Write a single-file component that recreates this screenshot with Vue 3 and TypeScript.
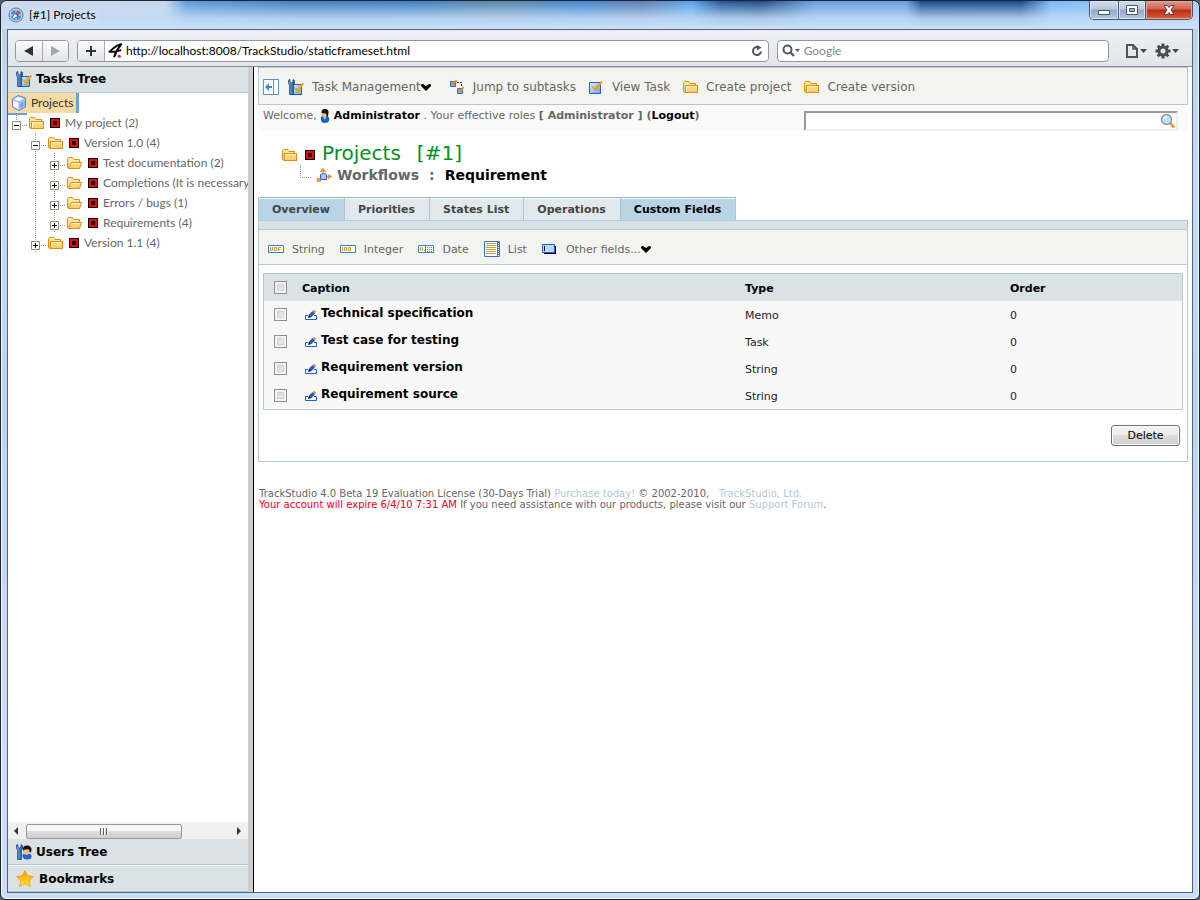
<script setup lang="ts">
import { ref } from 'vue'

interface TreeRow {
  label: string
  level: number
  open: boolean
  guides: boolean[]
}
interface Action {
  label: string
  icon: string
  menu?: boolean
}
interface Field {
  caption: string
  type: string
  order: number
  checked: boolean
}

const address = ref('http://localhost:8008/TrackStudio/staticframeset.html')
const webQuery = ref('')
const taskQuery = ref('')
const allChecked = ref(false)

const tree: TreeRow[] = [
  { label: 'My project (2)', level: 0, open: true, guides: [] },
  { label: 'Version 1.0 (4)', level: 1, open: true, guides: [false] },
  { label: 'Test documentation (2)', level: 2, open: false, guides: [false, true] },
  { label: 'Completions (It is necessary', level: 2, open: false, guides: [false, true] },
  { label: 'Errors / bugs (1)', level: 2, open: false, guides: [false, true] },
  { label: 'Requirements (4)', level: 2, open: false, guides: [false, true] },
  { label: 'Version 1.1 (4)', level: 1, open: false, guides: [false] },
]

const actions: Action[] = [
  { label: 'Task Management', icon: 'tasks', menu: true },
  { label: 'Jump to subtasks', icon: 'subtasks' },
  { label: 'View Task', icon: 'view' },
  { label: 'Create project', icon: 'folder' },
  { label: 'Create version', icon: 'folder' },
]

const tabs = ['Overview', 'Priorities', 'States List', 'Operations', 'Custom Fields']

const fieldTypes: Action[] = [
  { label: 'String', icon: 'string' },
  { label: 'Integer', icon: 'integer' },
  { label: 'Date', icon: 'date' },
  { label: 'List', icon: 'list' },
  { label: 'Other fields...', icon: 'other', menu: true },
]

const fields = ref<Field[]>([
  { caption: 'Technical specification', type: 'Memo', order: 0, checked: false },
  { caption: 'Test case for testing', type: 'Task', order: 0, checked: false },
  { caption: 'Requirement version', type: 'String', order: 0, checked: false },
  { caption: 'Requirement source', type: 'String', order: 0, checked: false },
])

function toggleAll() {
  fields.value.forEach((f) => (f.checked = allChecked.value))
}
</script>

<template>
  <div class="window">
    <svg class="defs" aria-hidden="true">
      <defs>
        <linearGradient id="gFolder" x1="0" y1="0" x2="0" y2="1">
          <stop offset="0" stop-color="#fff0b0" />
          <stop offset="1" stop-color="#fbc964" />
        </linearGradient>
        <linearGradient id="gBlue" x1="0" y1="0" x2="1" y2="1">
          <stop offset="0" stop-color="#e4f0ff" />
          <stop offset="1" stop-color="#6aa4f4" />
        </linearGradient>
        <linearGradient id="gStar" x1="0" y1="0" x2="0" y2="1">
          <stop offset="0" stop-color="#ff9c00" />
          <stop offset="1" stop-color="#ffe23c" />
        </linearGradient>
        <linearGradient id="gWrench" x1="0" y1="0" x2="1" y2="0">
          <stop offset="0" stop-color="#6ab0ee" />
          <stop offset="1" stop-color="#1a4f9c" />
        </linearGradient>
        <symbol id="folder" viewBox="0 0 16 16">
          <path d="M1.500 12.500V3.500L2.500 2.500H6.500L8 4.500H13.500V6.500H15.500V13.500H3L1.500 12.500Z" fill="url(#gFolder)" stroke="#dd8c14" />
          <path d="M3.500 13V6.500H15.500V13.500H3.500" fill="none" stroke="#dd8c14" />
          <path d="M4.500 12.500V7.500H14.500" fill="none" stroke="#fff6cc" />
        </symbol>
        <symbol id="folder-open" viewBox="0 0 16 16">
          <path d="M1.500 12.500V3.500L2.500 2.500H6.500L8 4.500H13.500V7.500H15.500L13.500 13.500H2.500Z" fill="url(#gFolder)" stroke="#dd8c14" />
          <path d="M2.500 13L5.500 7.500H15.500" fill="none" stroke="#dd8c14" />
          <path d="M5 10L6 8.500H14.500" fill="none" stroke="#fff6cc" />
        </symbol>
        <symbol id="state" viewBox="0 0 10 10">
          <path d="M0 0H10V10H0Z" fill="#000" />
          <path d="M1 1H9V9H1Z" fill="#ff0000" />
          <path d="M3 3H7V7H3Z" fill="#000" />
        </symbol>
        <symbol id="tasks" viewBox="0 0 16 16">
          <path d="M3.500 5.500H13.500V15.500H3.500Z" fill="url(#gBlue)" stroke="#1d5fd0" />
          <path d="M.5 1L2 .5V3L3.500 4L5 3V.5L6.500 1.500V4.500L5.500 6V15.500H1.500V6L.5 4.500Z" fill="url(#gWrench)" stroke="#1c3c68" stroke-width=".7" />
          <path d="M6 8L9 10L14.500 4L15.800 5L9.500 14Z" fill="#f7a61c" stroke="#d88a14" stroke-width=".4" />
        </symbol>
        <symbol id="users" viewBox="0 0 16 16">
          <path d="M.5 1L2 .5V3L3.500 4L5 3V.5L6.500 1.500V4.500L5.500 6V15.500H1.500V6L.5 4.500Z" fill="url(#gWrench)" stroke="#1c3c68" stroke-width=".7" />
          <path d="M6.500 12Q6 9 11 9.500Q16 9 15.500 13Q15.500 15.500 11 15.500Q7 15.500 6.500 12Z" fill="#1668dd" />
          <circle cx="10.500" cy="7" r="3.800" fill="#f6c078" />
          <path d="M7 7Q6 1.500 11 1.500Q16 1.500 15.500 7L14 9Q13.500 5.500 12 5Q10 6 8 5.500Z" fill="#101010" />
        </symbol>
        <symbol id="user" viewBox="0 0 10 14">
          <path d="M1 10Q0 7 3 7H7Q10 8 9 12Q8 14 5 14Q1 14 1 11Z" fill="#1561d8" />
          <path d="M3 8H6L5 11Z" fill="#f6c078" />
          <circle cx="4.500" cy="5" r="3" fill="#f6c078" />
          <path d="M1.500 4Q1 0 5 0Q9 0 8.500 4Q8.500 7 7 8L6 4.500Z" fill="#101010" />
        </symbol>
        <symbol id="cube" viewBox="0 0 16 16">
          <path d="M1.500 4L7 .5L14.500 3V12L8 15.500L1.500 12Z" fill="#8db4f0" stroke="#5b87d4" />
          <path d="M2.500 4.300L7 1.500L13.500 3.700L8 6.500Z" fill="#eef5ff" />
          <path d="M2 5.500L7.500 7.500V14.500L2 11.500Z" fill="#f5f9ff" />
          <path d="M8.500 7.500L14 5V11.500L8.500 14.500Z" fill="#a8c7f7" />
          <path d="M8.500 10L14 7.500M8.500 12L14 9.500M11 7V13" stroke="#5b87d4" stroke-width=".7" />
        </symbol>
        <symbol id="star" viewBox="0 0 18 17">
          <path d="M9 .5L11.700 5.700L17.500 6.500L13.300 10.600L14.300 16.500L9 13.700L3.700 16.500L4.700 10.600L.5 6.500L6.300 5.700Z" fill="url(#gStar)" stroke="#f39b0c" stroke-width=".8" />
        </symbol>
        <symbol id="subtasks" viewBox="0 0 16 16">
          <path d="M8 3.500H12.500V8" fill="none" stroke="#111" stroke-dasharray="2 1" />
          <path d="M1.500 2.500H6.500V7.500H1.500Z" fill="#7fb0f6" stroke="#2a6ae0" />
          <path d="M8.500 9.500H13.500V14.500H8.500Z" fill="#7fb0f6" stroke="#2a6ae0" />
          <path d="M2.500 3.500L4.500 5.500L7.500 1M9.500 10.500L11.500 12.500L14.500 8" fill="none" stroke="#e48b12" stroke-width="1.800" />
        </symbol>
        <symbol id="view" viewBox="0 0 16 16">
          <path d="M1.500 3.500H12.500V14.500H1.500Z" fill="url(#gBlue)" stroke="#1d5fe0" />
          <path d="M3.500 7L6.500 9L13.500 2L14.500 3L7.500 12.500Z" fill="#f5a01a" stroke="#d88408" stroke-width=".4" />
        </symbol>
        <symbol id="collapse" viewBox="0 0 16 16">
          <path d="M.5 .5H15.500V15.500H.5Z" fill="#f8fbff" stroke="#5b92cf" />
          <path d="M10.500 1V15" stroke="#5b92cf" />
          <path d="M2 8L6 4V7H9V9H6V12Z" fill="#4a85c8" />
        </symbol>
        <symbol id="string" viewBox="0 0 16 16">
          <path d="M.5 4.500H15.500V11.500H.5Z" fill="#fff" stroke="#3b7fdc" />
          <path d="M2.500 6V9.500H4.500V6M6.500 6V9.500H8.500V6.500H6.500M10.500 10V6.500H13M10.500 8.500H12.500" fill="none" stroke="#cf9a3c" />
        </symbol>
        <symbol id="integer" viewBox="0 0 16 16">
          <path d="M.5 4.500H15.500V11.500H.5Z" fill="#fff" stroke="#3b7fdc" />
          <path d="M2.500 6V10M4.500 6.500H6.500V9.500H4.500ZM8.500 6.500H10.500V9.500H8.500Z" fill="none" stroke="#cf9a3c" />
        </symbol>
        <symbol id="date" viewBox="0 0 16 16">
          <path d="M.5 4.500H15.500V11.500H.5Z" fill="#fff" stroke="#3b7fdc" />
          <path d="M2.500 6V10M4.500 6V10M6 9.500H7" stroke="#cf9a3c" />
          <path d="M7.500 5V11" stroke="#3b7fdc" />
          <path d="M9 6.500H15M9 8.500H15M9 10.500H15" stroke="#3b7fdc" stroke-dasharray="1 1" />
        </symbol>
        <symbol id="list" viewBox="0 0 16 16">
          <path d="M.5 .5H15.500V15.500H.5Z" fill="#fff" stroke="#2f78d8" />
          <path d="M2 2.500H12M2 4.500H12M2 6.500H12M2 8.500H12M2 10.500H12M2 12.500H12" stroke="#cf9a3c" />
          <path d="M13.500 1V15" stroke="#2f78d8" />
          <path d="M14.500 1V15" stroke="#2f78d8" stroke-dasharray="1 1" />
        </symbol>
        <symbol id="other" viewBox="0 0 16 16">
          <path d="M2 5H14V13H2Z" fill="#000" />
          <path d="M.5 3.500H12.500V11.500H.5Z" fill="#bcd8fc" stroke="#1e5fd8" />
          <path d="M2.500 5V10" stroke="#111" />
        </symbol>
        <symbol id="edit" viewBox="0 0 12 10">
          <path d="M3 5.500H.5V9.500H11.500V5.500H9" fill="#fff" stroke="#1860e0" />
          <path d="M3 8L4 4.500L6.500 7Z" fill="#111" />
          <path d="M4 4.500L7.500 1L10 3.500L6.500 7Z" fill="#1a5cd4" />
          <path d="M7.500 1L9.500 0L11 1.500L10 3.500Z" fill="#dd8c24" />
        </symbol>
        <symbol id="workflow" viewBox="0 0 16 16">
          <path d="M4.500 12.500V8Q4.500 6.500 7.500 6.500Q10.500 6.500 10.500 8V12.500Z" fill="#a8c8fa" stroke="#1d5fd8" />
          <path d="M7 7V3M4.500 5L7 2L9.500 5M16 9.500H12M14 7.500L11.500 9.500L14 12M4 11L1.500 14M1.500 10.500V14H5" fill="none" stroke="#e3901c" stroke-width="1.300" />
        </symbol>
        <symbol id="caret" viewBox="0 0 10 7">
          <path d="M0 1L1 0H2L5 2L8 0H9L10 1V2L5 7L0 2Z" fill="#000" />
        </symbol>
      </defs>
    </svg>

    <header class="titlebar">
      <svg class="compass" viewBox="0 0 16 16" aria-hidden="true">
        <circle cx="8" cy="8" r="7" fill="#c9ced6" stroke="#6b7686" />
        <circle cx="8" cy="8" r="5.300" fill="#3f8fdc" />
        <path d="M8 3V5M8 11V13M3 8H5M11 8H13" stroke="#dff0ff" />
        <path d="M12 4L9 9L7 7Z" fill="#e53a28" />
        <path d="M4 12L9 9L7 7Z" fill="#fff" />
      </svg>
      <span class="title">[#1] Projects</span>
      <div class="controls">
        <button class="ctl" type="button" aria-label="Minimize">
          <svg viewBox="0 0 14 12"><path d="M1.500 6.500H12.500V10.500H1.500Z" fill="#fff" stroke="#4a5568" /></svg>
        </button>
        <button class="ctl max" type="button" aria-label="Maximize">
          <svg viewBox="0 0 14 12"><path d="M1.500 1.500H12.500V10.500H1.500Z" fill="#fff" stroke="#4a5568" /><path d="M4.500 4.500H9.500V7.500H4.500Z" fill="#9fb4d0" stroke="#4a5568" /></svg>
        </button>
        <button class="ctl close" type="button" aria-label="Close">
          <svg viewBox="0 0 14 12"><path d="M2 1.500H5.500L7 3.500L8.500 1.500H12L9 6L12 10.500H8.500L7 8.500L5.500 10.500H2L5 6Z" fill="#fff" stroke="#5a4048" /></svg>
        </button>
      </div>
    </header>

    <div class="client">
      <nav class="navbar" aria-label="Browser">
        <div class="pair">
          <button type="button" aria-label="Back"><svg viewBox="0 0 10 10"><path d="M0 5L9 0V10Z" fill="#30343a" /></svg></button>
          <button type="button" aria-label="Forward"><svg viewBox="0 0 10 10"><path d="M9 5L0 0V10Z" fill="#a4a6ac" /></svg></button>
        </div>
        <div class="address">
          <button type="button" aria-label="Add bookmark"><svg viewBox="0 0 10 10"><path d="M0 5H10M5 0V10" stroke="#30343a" stroke-width="2" /></svg></button>
          <svg class="four" viewBox="0 0 18 18" aria-hidden="true">
            <path d="M15.500 2Q10 3 2.500 10.500Q9 10.500 15 8.500M15.500 2Q10 8 7.500 16" fill="none" stroke="#000" stroke-width="2" stroke-linejoin="round" />
            <circle cx="13" cy="15" r="1.600" fill="#f01818" />
          </svg>
          <input v-model="address" type="text" aria-label="Address" />
          <button class="reload" type="button" aria-label="Reload">
            <svg viewBox="0 0 12 12"><path d="M7 2H6A4 4 0 1 0 10 6.500" fill="none" stroke="#505358" stroke-width="2" /><path d="M6 0L10.500 2.500L6 5.500Z" fill="#505358" /></svg>
          </button>
        </div>
        <div class="websearch">
          <svg class="glass" viewBox="0 0 18 14" aria-hidden="true"><circle cx="5.500" cy="5.500" r="4" fill="none" stroke="#555a60" stroke-width="2" /><path d="M8.500 8.500L12 12" stroke="#555a60" stroke-width="2.400" /><path d="M13 5H18L15.500 8Z" fill="#555a60" /></svg>
          <input v-model="webQuery" type="text" placeholder="Google" aria-label="Web search" />
        </div>
        <button class="tool" type="button" aria-label="Page menu">
          <svg viewBox="0 0 22 16"><path d="M2 2H8L12 6V14H2Z" fill="none" stroke="#505358" stroke-width="2" /><path d="M8 1V6H13" fill="none" stroke="#505358" stroke-width="1.500" /><path d="M15 6H22L18.500 10Z" fill="#42464c" /></svg>
        </button>
        <button class="tool gear" type="button" aria-label="Settings menu">
          <svg viewBox="0 0 24 16"><circle cx="8" cy="8" r="4" fill="none" stroke="#484b50" stroke-width="3" /><path d="M8 .5V3.500M8 12.500V15.500M.5 8H3.500M12.500 8H15.500M2.700 2.700L4.800 4.800M11.200 11.200L13.300 13.300M2.700 13.300L4.800 11.200M11.200 4.800L13.300 2.700" stroke="#484b50" stroke-width="3" /><path d="M17 6H24L20.500 10Z" fill="#42464c" /></svg>
        </button>
      </nav>

      <div class="frames">
        <aside class="side">
          <button class="panel top" type="button"><svg class="i16"><use href="#tasks" /></svg>Tasks Tree</button>
          <div class="tree">
            <a class="root" href="#projects"><svg class="i16"><use href="#cube" /></svg>Projects</a>
            <div class="stub"></div>
            <ul>
              <li v-for="row in tree" :key="row.label">
                <span v-for="(g, i) in row.guides" :key="i" class="cell" :class="{ guide: g }"></span>
                <button class="cell knob" :class="{ first: row.level === 0 }" type="button" :aria-label="row.open ? 'Collapse' : 'Expand'">
                  <svg viewBox="0 0 9 9"><path d="M.5 .5H8.500V8.500H.5Z" fill="#fff" stroke="#8f8f78" /><path d="M2 4.500H7" stroke="#000" /><path v-if="!row.open" d="M4.500 2V7" stroke="#000" /></svg>
                </button>
                <svg class="i16 fold"><use :href="row.level === 2 ? '#folder-open' : '#folder'" /></svg>
                <svg class="state"><use href="#state" /></svg>
                <a href="#task">{{ row.label }}</a>
              </li>
            </ul>
          </div>
          <div class="scroll" aria-hidden="true">
            <svg viewBox="0 0 6 8"><path d="M5 0V8L1 4Z" fill="#333" /></svg>
            <div class="track"><div class="thumb"><i></i><i></i><i></i></div></div>
            <svg viewBox="0 0 6 8"><path d="M1 0V8L5 4Z" fill="#333" /></svg>
          </div>
          <button class="panel" type="button"><svg class="i16"><use href="#users" /></svg>Users Tree</button>
          <button class="panel marks" type="button"><svg class="star"><use href="#star" /></svg>Bookmarks</button>
        </aside>

        <main>
          <div class="actions">
            <button class="collapse" type="button" aria-label="Hide tree"><svg class="i16"><use href="#collapse" /></svg></button>
            <button v-for="a in actions" :key="a.label" class="action" :class="{ menu: a.menu }" type="button">
              <svg class="i16"><use :href="'#' + a.icon" /></svg><span>{{ a.label }}</span><svg v-if="a.menu" class="caret"><use href="#caret" /></svg>
            </button>
          </div>

          <div class="welcome">
            <p>Welcome, <svg class="user"><use href="#user" /></svg> <a class="strong" href="#me">Administrator</a> . Your effective roles <b>[ Administrator ] (<a class="strong" href="#logout">Logout</a>)</b></p>
            <div class="find">
              <input v-model="taskQuery" type="text" aria-label="Search tasks" />
              <button type="button" aria-label="Search">
                <svg viewBox="0 0 16 16"><path d="M10 10L14.500 14.500" stroke="#e3a62e" stroke-width="3" /><circle cx="6.500" cy="6.500" r="5" fill="#bfe0f5" stroke="#8a99a8" stroke-width="1.400" /><path d="M4 6Q4.500 4 7 3.500" fill="none" stroke="#fff" stroke-width="1.500" /></svg>
              </button>
            </div>
          </div>

          <div class="heading">
            <h1><svg class="i16"><use href="#folder" /></svg><svg class="state"><use href="#state" /></svg><a href="#projects">Projects</a><span>[#1]</span></h1>
            <h2><span class="elbow"></span><svg class="i16"><use href="#workflow" /></svg><a href="#workflows">Workflows</a><span class="colon">:</span><b>Requirement</b></h2>
          </div>

          <div class="tabs" role="tablist">
            <button v-for="(t, i) in tabs" :key="t" type="button" role="tab" :aria-selected="i === 4" :class="{ lit: i === 0 || i === 4, current: i === 4 }">{{ t }}</button>
          </div>
          <section class="card">
            <div class="strip"></div>
            <div class="types">
              <button v-for="a in fieldTypes" :key="a.label" class="action" type="button">
                <svg class="i16"><use :href="'#' + a.icon" /></svg><span>{{ a.label }}</span><svg v-if="a.menu" class="caret"><use href="#caret" /></svg>
              </button>
            </div>
            <table>
              <thead>
                <tr>
                  <th class="pick"><input v-model="allChecked" type="checkbox" aria-label="Select all" @change="toggleAll" /></th>
                  <th class="cap">Caption</th>
                  <th class="type">Type</th>
                  <th>Order</th>
                </tr>
              </thead>
              <tbody>
                <tr v-for="f in fields" :key="f.caption">
                  <td class="pick"><input v-model="f.checked" type="checkbox" :aria-label="f.caption" /></td>
                  <td class="cap"><a href="#edit"><svg class="edit"><use href="#edit" /></svg>{{ f.caption }}</a></td>
                  <td>{{ f.type }}</td>
                  <td>{{ f.order }}</td>
                </tr>
              </tbody>
            </table>
            <div class="buttons"><button type="button">Delete</button></div>
          </section>

          <footer>
            <div>TrackStudio 4.0 Beta 19 Evaluation License (30-Days Trial) <a href="#buy">Purchase today!</a> © 2002-2010, &nbsp; <a href="#site">TrackStudio, Ltd.</a></div>
            <div><em>Your account will expire 6/4/10 7:31 AM</em> If you need assistance with our products, please visit our <a href="#forum">Support Forum</a>.</div>
          </footer>
        </main>
      </div>
    </div>
  </div>
</template>

<style>
html,
body,
#app {
  height: 100%;
}
body {
  background: #55606c;
}
</style>

<style scoped>
* {
  box-sizing: border-box;
}
button {
  border: 0;
  padding: 0;
  margin: 0;
  background: none;
  font: inherit;
  color: inherit;
}
input {
  font: inherit;
  margin: 0;
  min-width: 0;
}
a {
  color: inherit;
  text-decoration: none;
}
.defs {
  position: absolute;
  width: 0;
  height: 0;
}
.i16 {
  width: 16px;
  height: 16px;
  flex: none;
}
.state {
  width: 10px;
  height: 10px;
  flex: none;
}
.window {
  min-height: 100%;
  display: flex;
  flex-direction: column;
  padding: 0 7px 7px;
  border: 1px solid #20262e;
  border-radius: 7px 7px 6px 6px;
  box-shadow: inset 0 0 0 1px #f2f8ff;
  background: linear-gradient(180deg, #b9d2ee 0, #c3dcf8 200px, #b8d4f2 400px, #c8dcf4 650px, #c9e0fa 100%);
  font-family: "DejaVu Sans", Verdana, sans-serif;
  font-size: 11px;
  color: #666;
  overflow: hidden;
}
.titlebar {
  height: 28px;
  margin: 0 -7px;
  padding-left: 7px;
  display: flex;
  align-items: center;
  border-radius: 7px 7px 0 0;
  background:
    linear-gradient(180deg, transparent 0, rgba(196, 220, 247, 0.85) 17px, #cbe1fb 100%),
    linear-gradient(90deg, #cfdbea 0, #c6d7ec 165px, #5f9ad6 185px, #427bbd 300px, #3d80c4 410px, #5c87a8 500px, #3f86d2 580px, #5b7dab 640px, #52a4f0 690px, #215796 720px, #1c4a86 760px, #69a0de 815px, #69a0de 905px, #164c90 920px, #14488a 1020px, #78b8f8 1050px, #a8cff8 100%);
}
.compass {
  width: 16px;
  height: 16px;
}
.title {
  flex: 1;
  margin-left: 5px;
  font: 12px/16px Lato, "Segoe UI", sans-serif;
  color: #000;
  text-shadow: 0 0 6px #fff;
}
.controls {
  align-self: flex-start;
  display: flex;
  margin-right: 6px;
  border: 1px solid #45566c;
  border-top: 0;
  border-radius: 0 0 5px 5px;
  overflow: hidden;
}
.ctl {
  width: 28px;
  height: 18px;
  display: grid;
  place-items: center;
  box-shadow: inset 0 0 0 1px #d8e6f4;
  background: linear-gradient(#d3deea 0, #b9c8da 45%, #93a9c4 50%, #b4cae2 100%);
}
.ctl + .ctl {
  border-left: 1px solid #45566c;
}
.ctl svg {
  width: 14px;
  height: 12px;
}
.max {
  width: 27px;
}
.close {
  width: 47px;
  box-shadow: inset 0 0 0 1px #eca492;
  background: linear-gradient(#e39a88 0, #cf6552 45%, #b82c16 50%, #d9603c 100%);
}
.client {
  flex: 1;
  display: flex;
  flex-direction: column;
  border: 1px solid #59636f;
  margin: 0 -1px -1px;
  background: #fff;
}
.navbar {
  height: 37px;
  padding: 5px 13px 0 7px;
  display: flex;
  align-items: center;
  border-bottom: 1px solid #8c8c94;
  background: linear-gradient(#eeeff4, #e4e4ec);
  font: 12px/16px Lato, "Segoe UI", sans-serif;
  color: #000;
}
.pair,
.address,
.websearch {
  height: 22px;
  display: flex;
  align-items: center;
  border: 1px solid #94969e;
  border-radius: 4px;
  background: #fff;
  overflow: hidden;
}
.pair button,
.address > button:first-child {
  height: 20px;
  width: 26px;
  display: grid;
  place-items: center;
  background: linear-gradient(#fdfdfe, #e2e3ea);
}
.pair button + button {
  border-left: 1px solid #a6a8b0;
}
.pair {
  flex: none;
}
.pair svg {
  width: 10px;
  height: 10px;
}
.address {
  flex: 693;
  margin-left: 8px;
}
.address > button:first-child {
  width: 27px;
  border-right: 1px solid #a6a8b0;
}
.address > button:first-child svg {
  width: 10px;
  height: 10px;
}
.four {
  width: 17px;
  height: 17px;
  flex: none;
  margin-left: 2px;
}
.navbar input {
  flex: 1;
  border: 0;
  outline: 0;
  padding: 0 2px;
  background: none;
}
.navbar input::placeholder {
  color: #85878c;
  opacity: 1;
}
.reload {
  width: 22px;
  height: 20px;
  display: grid;
  place-items: center;
}
.reload svg {
  width: 12px;
  height: 12px;
}
.websearch {
  flex: 332;
  margin-left: 8px;
}
.glass {
  width: 18px;
  height: 14px;
  margin-left: 4px;
  margin-right: 2px;
}
.tool {
  margin-left: 16px;
  flex: none;
}
.tool svg {
  display: block;
  width: 22px;
  height: 16px;
}
.gear {
  margin-left: 8px;
}
.gear svg {
  width: 24px;
}
.frames {
  flex: 1;
  display: flex;
}
.side {
  width: 240px;
  flex: none;
  display: flex;
  flex-direction: column;
}
.panel {
  height: 26px;
  flex: none;
  padding: 0 0 0 8px;
  display: flex;
  align-items: center;
  gap: 4px;
  background: #dae2e5;
  border-bottom: 1px solid #afcbdb;
  font-size: 12px;
  font-weight: bold;
  color: #000;
}
.top {
  padding-bottom: 1px;
}
.marks {
  gap: 5px;
}
.panel + .panel {
  height: 27px;
  border-top: 1px solid #fff;
}
.star {
  width: 18px;
  height: 17px;
}
.tree {
  flex: 1;
  overflow: hidden;
  font: 12px/20px Lato, "Segoe UI", sans-serif;
}
.root {
  width: 71px;
  height: 20px;
  padding-left: 3px;
  display: flex;
  align-items: center;
  gap: 4px;
  border-right: 3px solid #6f9fd4;
  background: #f7d9a2;
  color: #333;
}
.stub {
  width: 19px;
  height: 2px;
  margin-bottom: -2px;
  background: #6f9fd4;
}
ul {
  list-style: none;
  margin: 0;
  padding: 0;
}
li {
  height: 20px;
  display: flex;
  align-items: center;
  white-space: nowrap;
}
.cell {
  width: 19px;
  height: 20px;
  flex: none;
}
.guide,
.knob {
  background: repeating-linear-gradient(180deg, #9a9a86 0 1px, transparent 1px 2px) 8px 0 / 1px 20px no-repeat;
}
.knob {
  padding: 5px 0 0 4px;
  background:
    repeating-linear-gradient(180deg, #9a9a86 0 1px, transparent 1px 2px) 8px 0 / 1px 20px no-repeat,
    repeating-linear-gradient(90deg, #9a9a86 0 1px, transparent 1px 2px) 14px 12px / 6px 1px no-repeat;
}
.knob.first {
  background:
    repeating-linear-gradient(180deg, #9a9a86 0 1px, transparent 1px 2px) 8px 0 / 1px 8px no-repeat,
    repeating-linear-gradient(90deg, #9a9a86 0 1px, transparent 1px 2px) 14px 12px / 6px 1px no-repeat;
}
.knob svg {
  display: block;
  width: 9px;
  height: 9px;
}
.fold {
  margin: 0 6px 0 1px;
}
li .state {
  margin-right: 5px;
}
.scroll {
  height: 17px;
  flex: none;
  display: flex;
  align-items: center;
  padding: 1px 6px 0 5px;
  background: #f1f1f2;
}
.scroll svg {
  width: 6px;
  height: 8px;
}
.track {
  flex: 1;
  padding: 0 7px;
}
.thumb {
  width: 77%;
  height: 15px;
  display: flex;
  justify-content: center;
  align-items: center;
  gap: 1px;
  border: 1px solid #979797;
  border-radius: 2px;
  background: linear-gradient(#f6f6f6 0 45%, #dcdcdd 50%, #cfcfd1 100%);
}
.thumb i {
  width: 2px;
  height: 7px;
  border-left: 1px solid #5c5c5c;
  background: #f6f6f6;
}
main {
  flex: 1;
  min-width: 0;
  margin-left: 5px;
  padding: 0 4px;
  border-left: 1px solid #000;
  box-shadow: -5px 0 0 #cdcdcd;
}
.actions {
  height: 38px;
  padding: 2px 0 0 4px;
  display: flex;
  align-items: center;
  border: 1px solid #b0c9d8;
  background: #f3f4ef;
}
.action {
  display: flex;
  align-items: center;
  margin-right: 15px;
  font-size: 11px;
  white-space: nowrap;
}
.actions .action {
  margin-right: 12px;
  font-size: 12px;
}
.action .i16 {
  margin-right: 8px;
}
.collapse {
  height: 16px;
  margin-right: 9px;
}
.actions .menu {
  margin-right: 18px;
}
.caret {
  width: 10px;
  height: 7px;
}
.welcome {
  height: 26px;
  display: flex;
  justify-content: space-between;
  padding: 0 10px 0 5px;
  background: #fafafa;
}
p {
  margin: 0;
  font-size: 11px;
  line-height: 21px;
  white-space: nowrap;
}
.user {
  width: 10px;
  height: 14px;
  vertical-align: -4px;
}
.strong {
  font-weight: bold;
  color: #000;
}
.find {
  width: 374px;
  height: 20px;
  margin-top: 6px;
  display: flex;
  align-items: center;
  border: 2px solid #9a9a9a;
  border-right-color: #eee;
  border-bottom-color: #eee;
  background: #fff;
}
.find input {
  flex: 1;
  border: 0;
  outline: 0;
  background: none;
}
.find button,
.find svg {
  width: 16px;
  height: 16px;
  display: block;
}
.heading {
  padding: 11px 0 0 23px;
}
h1,
h2 {
  margin: 0;
  display: flex;
  align-items: center;
  font-weight: normal;
}
h1 {
  font-size: 20px;
  line-height: 23px;
  color: #00921e;
}
h1 .i16 {
  margin-right: 8px;
  margin-top: 2px;
}
h1 .state {
  margin-right: 7px;
  margin-top: 2px;
}
h1 span {
  margin-left: 16px;
}
h2 {
  padding-left: 19px;
  font-size: 14px;
  line-height: 20px;
  font-weight: bold;
}
h2 .i16 {
  margin: 0 5px 0 5px;
}
h2 b {
  color: #000;
}
.elbow {
  width: 11px;
  height: 13px;
  align-self: flex-start;
  border-left: 1px dotted #9a9a86;
  border-bottom: 1px dotted #9a9a86;
}
.colon {
  margin: 0 10px;
}
.tabs {
  margin-top: 12px;
  display: flex;
}
.tabs button {
  height: 23px;
  padding: 0 14px 0 13px;
  border-top: 1px solid #8fb5cc;
  border-right: 1px solid #a9c7d9;
  box-shadow: inset 0 1px 0 #fff;
  background: #e1e9ed;
  font-size: 11px;
  font-weight: bold;
  color: #444;
  white-space: nowrap;
}
.tabs button:first-child {
  border-left: 1px solid #a9c7d9;
}
.tabs .lit {
  background: #b9d5e5;
}
.tabs .current {
  color: #000;
}
.card {
  border: 1px solid #b0c9d8;
  padding-bottom: 15px;
}
.strip {
  height: 9px;
  background: #dae2e5;
  border-bottom: 1px solid #b0c9d8;
}
.types {
  height: 35px;
  padding: 4px 0 0 9px;
  display: flex;
  align-items: center;
  border-bottom: 1px solid #b0c9d8;
  background: #f3f4ef;
}
table {
  width: calc(100% - 8px);
  margin: 8px 4px 0;
  border: 1px solid #b0c9d8;
  border-collapse: separate;
  border-spacing: 0;
  table-layout: fixed;
  background: #f8f8f8;
  color: #222;
}
th,
td {
  height: 27px;
  padding: 1px 0 0;
  text-align: left;
}
thead {
  background: #dae2e5;
  color: #000;
}
.pick {
  width: 38px;
  padding: 0 0 0 10px;
}
.cap {
  width: 443px;
}
.type {
  width: 265px;
}
td.cap {
  padding: 0 0 4px 3px;
  font-size: 12px;
  font-weight: bold;
  color: #000;
}
.edit {
  width: 12px;
  height: 10px;
  margin-right: 4px;
  vertical-align: -3px;
}
input[type="checkbox"] {
  appearance: none;
  display: block;
  width: 13px;
  height: 13px;
  border: 1px solid #8e8f8f;
  box-shadow: inset 0 0 0 2px #f4f4f4, inset 0 0 0 3px #cfd3da;
  background: linear-gradient(135deg, #c9cfd8, #f6f6f6);
}
.buttons {
  display: flex;
  justify-content: flex-end;
  padding: 15px 7px 0 0;
}
.buttons button {
  width: 69px;
  height: 21px;
  border: 1px solid #707070;
  border-radius: 3px;
  box-shadow: inset 0 0 0 1px #fcfcfc;
  background: linear-gradient(#f3f3f3 0, #ebebeb 49%, #dddddd 50%, #cfcfcf 100%);
  color: #000;
}
footer {
  margin: 26px 0 0 1px;
  font-size: 10px;
  line-height: 11px;
}
footer a {
  color: #b3c8d6;
}
em {
  font-style: normal;
  color: #f00018;
}
</style>
